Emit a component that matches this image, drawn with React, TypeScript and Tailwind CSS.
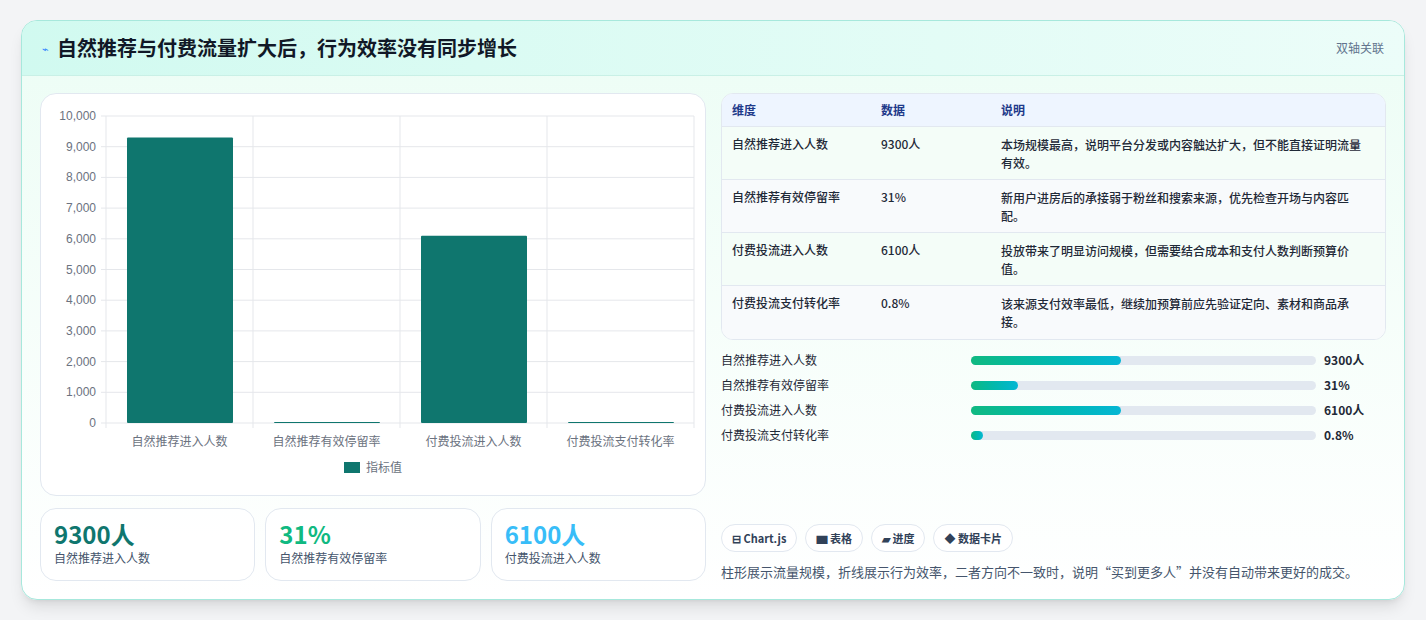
import React from 'react';

const F = { fontFamily: '"Noto Sans CJK SC", "Noto Sans", sans-serif' };

const rows = [
  ['自然推荐进入人数', '9300人', '本场规模最高，说明平台分发或内容触达扩大，但不能直接证明流量有效。'],
  ['自然推荐有效停留率', '31%', '新用户进房后的承接弱于粉丝和搜索来源，优先检查开场与内容匹配。'],
  ['付费投流进入人数', '6100人', '投放带来了明显访问规模，但需要结合成本和支付人数判断预算价值。'],
  ['付费投流支付转化率', '0.8%', '该来源支付效率最低，继续加预算前应先验证定向、素材和商品承接。'],
];
const bars = [
  ['自然推荐进入人数', '9300人', '43.5%'],
  ['自然推荐有效停留率', '31%', '13.5%'],
  ['付费投流进入人数', '6100人', '43.5%'],
  ['付费投流支付转化率', '0.8%', '3.5%'],
];
const values = [9300, 31, 6100, 0.8];
const cats = ['自然推荐进入人数', '自然推荐有效停留率', '付费投流进入人数', '付费投流支付转化率'];

const Chart = () => {
  const x0 = 65, x1 = 653, y0 = 22, y1 = 329;
  const h = y1 - y0, w = (x1 - x0) / 4;
  const ticks = Array.from({ length: 11 }, (_, i) => i * 1000);
  return (
    <svg width="665" height="400" className="block" style={{ fontFamily: '"Liberation Sans", "Noto Sans CJK SC", sans-serif' }}>
      {ticks.map(t => {
        const y = y1 - (t / 10000) * h;
        return (
          <g key={t}>
            <line x1={x0 - 5} x2={x1} y1={y} y2={y} stroke="#e5e7eb" />
            <text x={x0 - 10} y={y + 4} textAnchor="end" fontSize="12" fill="#6b7280">{t.toLocaleString('en-US')}</text>
          </g>
        );
      })}
      {[0, 1, 2, 3, 4].map(i => (
        <line key={i} x1={x0 + i * w} x2={x0 + i * w} y1={y0} y2={y1 + 5} stroke="#e5e7eb" />
      ))}
      {values.map((v, i) => {
        const bh = Math.max((v / 10000) * h, 1);
        return <rect key={i} x={x0 + i * w + 21} y={y1 - bh} width={106} height={bh} fill="#0f766e" rx="1" />;
      })}
      {cats.map((c, i) => (
        <text key={c} x={x0 + i * w + w / 2} y={352} textAnchor="middle" fontSize="12" fill="#6b7280">{c}</text>
      ))}
      <rect x={303} y={368} width={16} height={11} fill="#0f766e" />
      <text x={325} y={378} fontSize="12" fill="#6b7280">指标值</text>
    </svg>
  );
};

export default function App() {
  return (
    <div className="w-[1426px] h-[620px] bg-[#f3f4f6] pt-5 px-[21px]" style={F}>
      <div className="w-[1384px] h-[580px] rounded-2xl border border-[#a7e8dc] bg-gradient-to-b from-[#ecfdf5] to-white shadow-lg overflow-hidden">
        <div className="h-[55px] flex items-center justify-between px-5 bg-gradient-to-r from-[#d1faf0] to-[#ecfdf9] border-b border-[#c9f0e6]">
          <div className="flex items-center gap-2">
            <span className="text-[11px] text-blue-500">⌁</span>
            <h1 className="text-xl font-bold text-[#111827]">自然推荐与付费流量扩大后，行为效率没有同步增长</h1>
          </div>
          <span className="text-xs text-slate-500">双轴关联</span>
        </div>
        <div className="flex gap-[15px] px-[18px] pt-[17px]">
          <div className="w-[666px] flex flex-col gap-3">
            <div className="h-[403px] rounded-2xl border border-slate-200 bg-white pt-0">
              <Chart />
            </div>
            <div className="grid grid-cols-3 gap-[10px]">
              {[['9300人', 'text-[#0f766e]', '自然推荐进入人数'], ['31%', 'text-[#10b981]', '自然推荐有效停留率'], ['6100人', 'text-[#38bdf8]', '付费投流进入人数']].map(([v, c, l]) => (
                <div key={l} className="h-[73px] rounded-2xl border border-slate-200 bg-white/80 px-[13px] pt-[9px]">
                  <div className={`text-2xl font-bold leading-8 ${c}`}>{v}</div>
                  <div className="text-xs text-slate-600">{l}</div>
                </div>
              ))}
            </div>
          </div>
          <div className="w-[667px] flex flex-col">
            <div className="rounded-xl border border-slate-200 overflow-hidden bg-white text-xs">
              <div className="flex h-[33px] items-center bg-[#eef5ff] border-b border-slate-200 text-[#1e3a8a] font-semibold">
                <div className="w-[159px] pl-[10px]">维度</div>
                <div className="w-[120px]">数据</div>
                <div>说明</div>
              </div>
              {rows.map((r, i) => (
                <div key={i} className={`flex h-[53px] pt-[9px] text-[#1f2937] ${i < 3 ? 'border-b border-slate-200' : ''} ${i % 2 ? 'bg-[#f8fafc]' : 'bg-[#f4fdf8]'}`}>
                  <div className="w-[159px] pl-[10px] font-medium">{r[0]}</div>
                  <div className="w-[120px] font-medium">{r[1]}</div>
                  <div className="w-[370px] leading-[18px] font-medium">{r[2]}</div>
                </div>
              ))}
            </div>
            <div className="mt-[11px] flex flex-col gap-[7px] text-xs">
              {bars.map(([l, v, p]) => (
                <div key={l} className="flex items-center h-[18px]">
                  <div className="w-[250px] text-[#1f2937]">{l}</div>
                  <div className="w-[345px] h-[9px] rounded-full bg-[#e2e8f0]">
                    <div className="h-full rounded-full bg-gradient-to-r from-[#10b981] to-[#06b6d4]" style={{ width: p }} />
                  </div>
                  <div className="ml-2 font-bold text-[#1f2937]">{v}</div>
                </div>
              ))}
            </div>
            <div className="mt-[80px] flex gap-[8px] text-[11px] font-semibold text-slate-700">
              {['⊟ Chart.js', '▆ 表格', '▰ 进度', '◆ 数据卡片'].map(t => (
                <span key={t} className="h-[28px] px-[10px] flex items-center rounded-full border border-slate-200 bg-white">{t}</span>
              ))}
            </div>
            <p className="mt-[10px] text-[13px] text-slate-600">柱形展示流量规模，折线展示行为效率，二者方向不一致时，说明“买到更多人”并没有自动带来更好的成交。</p>
          </div>
        </div>
      </div>
    </div>
  );
}
